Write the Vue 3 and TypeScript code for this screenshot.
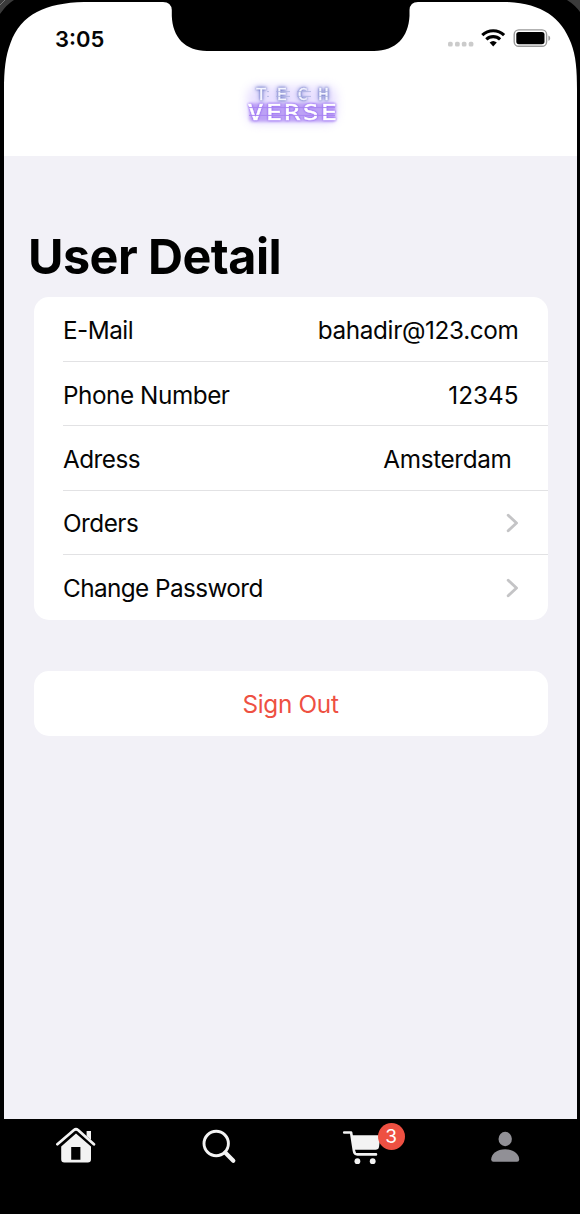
<script setup lang="ts">
interface Row {
  label: string
  value?: string
  kind: string
}

const rows: Row[] = [
  { label: 'E-Mail', value: 'bahadir@123.com', kind: 'email' },
  { label: 'Phone Number', value: '12345', kind: 'phone' },
  { label: 'Adress', value: 'Amsterdam', kind: 'address' },
  { label: 'Orders', kind: 'orders' },
  { label: 'Change Password', kind: 'password' },
]
const cartCount = 3
</script>

<template>
  <div class="device">
    <div class="screen">
      <header class="header">
        <div class="status">
          <span class="time">3:05</span>
          <svg class="indicators" width="104" height="24" viewBox="0 0 104 24">
            <g fill="#cbcbcb">
              <rect x="0" y="14.8" width="4.7" height="4.7" rx="1.6" />
              <rect x="7" y="14.8" width="4.7" height="4.7" rx="1.6" />
              <rect x="13.8" y="14.8" width="4.7" height="4.7" rx="1.6" />
              <rect x="20.7" y="14.8" width="4.7" height="4.7" rx="1.6" />
            </g>
            <g fill="none" stroke="#000" stroke-width="3.1">
              <path d="M34.3 8.2a15.6 15.6 0 0 1 21.8 0" />
              <path d="M38.3 12.4a10 10 0 0 1 13.8 0" />
            </g>
            <path d="M41.6 15.6a5.6 5.6 0 0 1 7.2 0l-3.6 3.8z" fill="#000" />
            <rect x="66.2" y="2.9" width="32.4" height="16.4" rx="4.6" fill="none" stroke="#999" stroke-width="1.4" />
            <rect x="68.3" y="5" width="28.2" height="12.2" rx="2.6" fill="#000" />
            <path d="M100.4 8.4c2.4 1 2.4 4.4 0 5.4z" fill="#999" />
          </svg>
        </div>
        <svg class="logo" width="140" height="76" viewBox="0 0 140 76">
          <defs>
            <filter id="halo" x="-30%" y="-60%" width="160%" height="220%">
              <feGaussianBlur stdDeviation="5" />
            </filter>
            <filter id="soft" x="-10%" y="-40%" width="120%" height="180%">
              <feGaussianBlur stdDeviation="1.8" />
            </filter>
          </defs>
          <rect x="26" y="26" width="90" height="38" rx="10" fill="#cdbcff" opacity=".45" filter="url(#halo)" />
          <rect x="28" y="43" width="87" height="19" rx="4" fill="#a078f0" opacity=".6" filter="url(#soft)" />
          <text class="tech" x="35" y="39.9" textLength="83" lengthAdjust="spacingAndGlyphs">TECH</text>
          <text class="verse" x="26.5" y="60" textLength="92" lengthAdjust="spacingAndGlyphs">VERSE</text>
          <g fill="none" stroke="#a986f2" stroke-width="1">
            <path d="M28 47.6h86M28 55.4h86" />
          </g>
          <path d="M46 31.6h62M46 36.4h62" stroke="#a9b0de" stroke-width=".8" stroke-dasharray="14 7" stroke-dashoffset="-9" />
        </svg>
      </header>

      <main class="content">
        <h1 class="title"><span>User Detail</span></h1>
        <section class="card">
          <div v-for="row in rows" :key="row.kind" class="row" :class="row.kind">
            <span class="label">{{ row.label }}</span>
            <span v-if="row.value" class="value">{{ row.value }}</span>
            <svg v-else class="chevron" width="13" height="20" viewBox="0 0 13 20">
              <path d="M2.2 2.2l8.3 7.8-8.3 7.8" fill="none" stroke="#c4c4c6" stroke-width="2.9" stroke-linecap="round" stroke-linejoin="round" />
            </svg>
          </div>
        </section>
        <button class="signout" type="button"><span>Sign Out</span></button>
      </main>

      <nav class="tabs">
        <a class="tab">
          <svg width="42" height="38" viewBox="0 0 42 38">
            <path d="M2.4 17.2L19 3q2-1.6 4 0L38.9 17.2" fill="none" stroke="#f3f3f3" stroke-width="2.8" stroke-linecap="round" />
            <path d="M31.6 4h4.4v9L31.6 9z" fill="#f3f3f3" />
            <path d="M21 6.6L36 19.5v12.7q0 3.2-3.2 3.2H9.4q-3.2 0-3.2-3.2V19.5zM16.2 20v12.7h9.2V20z" fill="#f3f3f3" fill-rule="evenodd" />
          </svg>
        </a>
        <a class="tab">
          <svg width="42" height="38" viewBox="0 0 42 38">
            <circle cx="18.2" cy="16.5" r="12.2" fill="none" stroke="#f3f3f3" stroke-width="2.9" />
            <path d="M27.4 25.8l7.9 8" fill="none" stroke="#f3f3f3" stroke-width="4.2" stroke-linecap="round" />
          </svg>
        </a>
        <a class="tab">
          <svg width="42" height="38" viewBox="0 0 42 38">
            <path d="M3.2 5.5h6.9L12.9 23.6q.5 3.8 3.4 3.8H35" fill="none" stroke="#f3f3f3" stroke-width="2.6" stroke-linecap="round" stroke-linejoin="round" />
            <path d="M10.9 8.2H39.5l-1.5 11.8q-.4 2.8-3.4 2.8H13.2z" fill="#f3f3f3" />
            <circle cx="16.4" cy="34.2" r="2.9" fill="#f3f3f3" />
            <circle cx="31.7" cy="34.2" r="2.9" fill="#f3f3f3" />
          </svg>
          <span class="badge">{{ cartCount }}</span>
        </a>
        <a class="tab">
          <svg width="42" height="38" viewBox="0 0 42 38">
            <ellipse cx="21.2" cy="12" rx="6.7" ry="7.2" fill="#919096" />
            <path d="M7.2 32.5C7.2 27 13.2 22.2 21.2 22.2s14 4.8 14 10.3q0 2.2-2.2 2.2H9.4q-2.2 0-2.2-2.2z" fill="#919096" />
          </svg>
        </a>
      </nav>
    </div>

    <svg class="bezel" width="580" height="156" viewBox="0 0 580 156">
      <path d="M0 0H580V156H577V90C577 70 576 56 571 43C561 17 541 3 505 2H418Q410 2 409.5 10V16C408.5 37 396 51 374 51H207C185 51 172.5 37 171.8 16V10Q171.2 2 163 2H84C46 3 21 14 10.5 43C5.5 56 4 70 4 90V156H0z" fill="#000" />
      <path d="M0 0H14Q7 4 0 14z" fill="#3b3b3b" />
      <path d="M567 0H580V12Q575 5 567 0z" fill="#3b3b3b" />
      <path d="M0 5L5 0" stroke="#777" stroke-width="1" />
    </svg>
  </div>
</template>

<style>
html,
body {
  margin: 0;
  background: #000;
}
</style>

<style scoped>
.device {
  position: relative;
  box-sizing: border-box;
  width: 580px;
  height: 1214px;
  padding: 0 3px 0 4px;
  background: #000;
  color: #050505;
  font-family: Inter, "Liberation Sans", sans-serif;
  overflow: hidden;
}
.screen {
  display: flex;
  flex-direction: column;
  height: 100%;
  background: #f2f1f7;
}
.bezel {
  position: absolute;
  inset: 0 auto auto 0;
  pointer-events: none;
}
.header {
  display: flex;
  flex-direction: column;
  align-items: center;
  height: 156px;
  background: #fff;
}
.status {
  display: flex;
  justify-content: space-between;
  align-items: center;
  box-sizing: border-box;
  width: 100%;
  height: 52px;
  padding: 26px 25px 0 51px;
}
.time {
  font-size: 22px;
  line-height: 26px;
  font-weight: 600;
}
.logo {
  margin-top: 8px;
}
.tech {
  font: 400 16.5px "DejaVu Sans Mono", monospace;
  letter-spacing: 10px;
  fill: #f4f5ff;
  stroke: #f4f5ff;
  stroke-width: 0.3px;
  filter: drop-shadow(0 0 1px #5a63b8) drop-shadow(0 0 2px #8a92da);
}
.verse {
  font: 400 21.5px "DejaVu Sans Mono", monospace;
  letter-spacing: 2px;
  fill: #fff;
  stroke: #fff;
  stroke-width: 0.4px;
  filter: drop-shadow(0 0 1px #8048f4);
}
.content {
  flex: 1;
  padding: 72px 29.5px 0;
}
.title {
  margin: 0 0 11px -5.5px;
  font-size: 48.5px;
  line-height: 58px;
  font-weight: 700;
  letter-spacing: -0.55px;
  color: #000;
}
.card,
.signout {
  border-radius: 15px;
  background: #fff;
}
.card {
  height: 323px;
  padding-left: 29.5px;
}
.row {
  display: flex;
  align-items: center;
  justify-content: space-between;
  box-sizing: border-box;
  height: 64.6px;
  padding: 2px 29px 0 0;
  border-bottom: 1px solid #e2e2e4;
  font-size: 24.3px;
  line-height: 30px;
}
.row:last-child {
  border-bottom: 0;
}
.label {
  letter-spacing: -0.52px;
}
.value {
  letter-spacing: -0.35px;
}
.phone .label {
  letter-spacing: -0.45px;
}
.phone .value {
  letter-spacing: 0;
}
.password .label {
  letter-spacing: -0.58px;
}
.phone {
  padding-top: 3px;
}
.orders,
.password {
  padding-top: 0.6px;
}
.address {
  padding-right: 36px;
}
.signout {
  display: block;
  width: 100%;
  height: 65px;
  margin: 51px 0 0;
  padding: 0;
  border: 0;
  color: #ee5042;
  font: inherit;
  font-size: 24.3px;
  letter-spacing: -0.3px;
}
.tabs {
  display: grid;
  grid-template-columns: repeat(4, 1fr);
  height: 95px;
  background: #000;
}
.tab {
  position: relative;
  display: flex;
  justify-content: center;
  align-items: flex-start;
  padding-top: 8px;
}
.badge {
  position: absolute;
  top: 4px;
  left: 87px;
  width: 27px;
  height: 27px;
  border-radius: 50%;
  background: #ee5042;
  color: #fff;
  font-size: 19px;
  line-height: 27px;
  text-align: center;
}
</style>
